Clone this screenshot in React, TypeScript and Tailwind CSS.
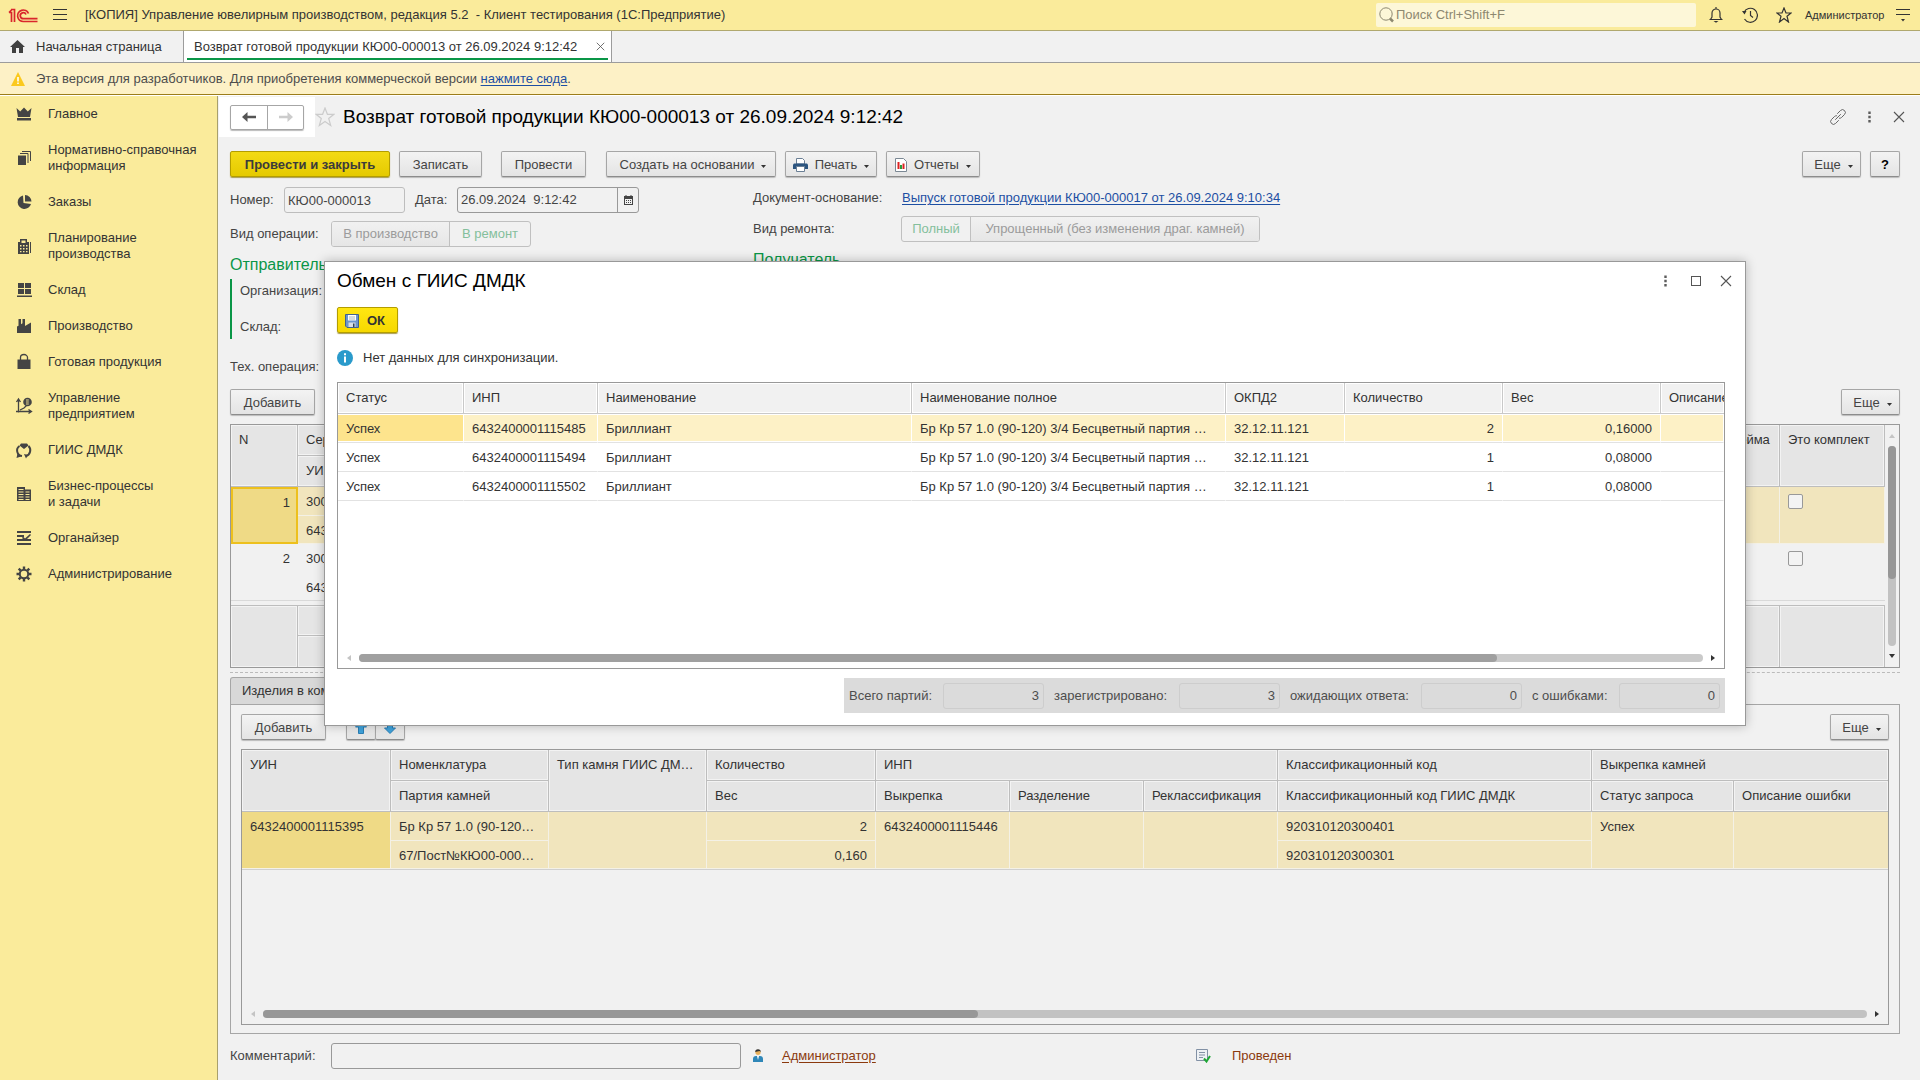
import type { ReactNode } from 'react'

type IconName = 'crown' | 'docs' | 'pie' | 'calc' | 'boxes' | 'factory' | 'bag' | 'chart' | 'cycle' | 'building' | 'list' | 'gear'

const ICONS: Record<IconName, ReactNode> = {
  crown: <path d="M1.500 3l3.700 3.500L9 2.500l3.800 4L16.500 3l-1.500 9H3zM2 13h14v2.500H2z" />,
  docs: (
    <>
      <path d="M3 6.500h8V16H3z" />
      <path d="M5 4.500h8V14M7 2.500h8.500V12" fill="none" stroke="currentColor" />
    </>
  ),
  pie: (
    <>
      <path d="M8 2.500a6.800 6.800 0 1 0 8 8.500L8.500 10z" />
      <path d="M10 2v6.500h6.500A6.500 6.500 0 0 0 10 2z" />
    </>
  ),
  calc: (
    <>
      <path d="M5 2h7v3h2v12H3V5h2zm1.500 1.500V6h4V3.500zM5 8v1.500h1.500V8zm3 0v1.500h1.500V8zm3 0v1.500h1.500V8zm-6 3v1.500h1.500V11zm3 0v1.500h1.500V11zm3 0v1.500h1.500V11zm-6 3v1.200h1.500V14zm3 0v1.200h1.500V14zm3 0v1.200h1.500V14z" fillRule="evenodd" />
      <path d="M15 5h1v11h-1z" />
    </>
  ),
  boxes: <path d="M3 2h6v5H3zM10 2h6v5h-6zM3 8h6v5H3zM10 8h6v5h-6zM2 14.500h15V16H2z" />,
  factory: <path d="M2 16V9.500l1.500-.8V2H6v5.200l1.500-1V2H10v7l6-3.500V16z" />,
  bag: (
    <>
      <path d="M2.500 6.500h13V16h-13z" />
      <path d="M5.500 8.500V4.500a3.500 3 0 0 1 7 0v4" fill="none" stroke="currentColor" strokeWidth="1.300" />
    </>
  ),
  chart: (
    <>
      <path d="M3.500 2v13.500M1 14.500h15M1.500 5l2-3 2 3M13.500 12.500l3 2-3 2M5 13l4-2 3-3" fill="none" stroke="currentColor" strokeWidth="1.300" />
      <circle cx="12.500" cy="5" r="4.300" />
      <path d="M11 3h2.800M11 5h2.800M11 7h2.800" stroke="#faeb9b" strokeWidth=".9" />
    </>
  ),
  cycle: (
    <>
      <path d="M4.500 5A5.500 5.500 0 0 0 7 15M13.500 5a6 6 0 0 1-2.500 10" fill="none" stroke="currentColor" strokeWidth="2" />
      <path d="M6 2.500h6l1.500 2L9 8 4.500 4.500zM1.500 17l1-4.500L6 15.500zM9 13l4 1-2 3.500z" />
    </>
  ),
  building: <path d="M2 2h8v2.500h6V16H2zm1.500 2v1h5V4zm0 2.500v1h5v-1zm0 2.500v1h5V9zm0 2.500v1h5v-1zm7-5v1h4v-1zm0 2.500v1h4V9zm0 2.500v1h4v-1zm0 2.500v1h4v-1zm-7 0v1h5v-1z" fillRule="evenodd" />,
  list: <path d="M2 2h14v2H2zM2 6h7v2H2zM2 10h14v2H2zM2 14h14v2H2zM8 7.500l2 2 5-4.500 1 1-6 6-3-3z" />,
  gear: (
    <>
      <circle cx="9" cy="9" r="4.200" fill="none" stroke="currentColor" strokeWidth="2" />
      <path d="M9 1.500v3M9 13.500v3M1.500 9h3M13.500 9h3M3.700 3.700l2 2M12.300 12.300l2 2M3.700 14.300l2-2M12.300 5.700l2-2" stroke="currentColor" strokeWidth="2.400" />
    </>
  ),
}

const SECTIONS: { icon: IconName; lines: string[] }[] = [
  { icon: 'crown', lines: ['Главное'] },
  { icon: 'docs', lines: ['Нормативно-справочная', 'информация'] },
  { icon: 'pie', lines: ['Заказы'] },
  { icon: 'calc', lines: ['Планирование', 'производства'] },
  { icon: 'boxes', lines: ['Склад'] },
  { icon: 'factory', lines: ['Производство'] },
  { icon: 'bag', lines: ['Готовая продукция'] },
  { icon: 'chart', lines: ['Управление', 'предприятием'] },
  { icon: 'cycle', lines: ['ГИИС ДМДК'] },
  { icon: 'building', lines: ['Бизнес-процессы', 'и задачи'] },
  { icon: 'list', lines: ['Органайзер'] },
  { icon: 'gear', lines: ['Администрирование'] },
]

const BATCHES = [
  { inp: '6432400001115485', qty: '2', weight: '0,16000' },
  { inp: '6432400001115494', qty: '1', weight: '0,08000' },
  { inp: '6432400001115502', qty: '1', weight: '0,08000' },
]

const TOTALS = [
  { id: 'total', label: 'Всего партий:', value: '3', width: 'w-[84px]' },
  { id: 'registered', label: 'зарегистрировано:', value: '3', width: 'w-[115px]' },
  { id: 'waiting', label: 'ожидающих ответа:', value: '0', width: 'w-[121px]' },
  { id: 'errors', label: 'с ошибками:', value: '0', width: 'w-[77px]' },
]

const BUTTON = 'flex h-[26px] shrink-0 items-center justify-center rounded-xs border border-[#a6a6a6] border-b-[#8c8c8c] bg-linear-to-b from-[#f3f3f3] to-[#e4e4e4] pt-px text-[#444] shadow-[0_1px_1px_#bbb]'
const SEGMENTS = 'flex h-[26px] overflow-hidden rounded-[3px] border border-[#c0c0c0]'
const HEAD = 'truncate border-r border-b border-[#bdbdbd] bg-[#e5e5e5] px-2 pt-[7px] text-left align-top font-normal leading-4 shadow-[inset_0_0_0_1px_#f3f3f3]'
const CELL = 'truncate border-r border-b border-[#f4f1e6] bg-[#f1e5bd] px-2 pt-[7px] align-top leading-4'
const DIALOG_HEAD = 'h-[31px] truncate border-r border-b border-[#c9c9c9] bg-[#f1f1f1] px-2 text-left font-normal shadow-[inset_0_0_0_1px_#fff]'
const DIALOG_CELL = 'truncate border-r border-b border-b-[#e2e2e2] px-2 pt-[2px]'
const DIALOG_SELECTED = 'border-r-white shadow-[inset_0_1px_#fff,inset_0_-1px_#fff]'

function Caret() {
  return (
    <svg className="h-[3px] w-[5px] shrink-0" viewBox="0 0 5 3" fill="#333">
      <path d="M0 0h5L2.500 3z" />
    </svg>
  )
}

function MoreButton() {
  return (
    <button type="button" className={`${BUTTON} w-[59px] gap-[7px] pl-1`}>
      Еще
      <span className="pt-1"><Caret /></span>
    </button>
  )
}

function Dots() {
  return (
    <svg className="h-3 w-[3px]" viewBox="0 0 3 12" fill="#5c5c5c">
      <path d="M.300.500h2.400v2.400H.300zM.300 4.800h2.400v2.400H.300zM.300 9.100h2.400v2.400H.300z" />
    </svg>
  )
}

function Cross({ className }: { className: string }) {
  return (
    <svg className={className} viewBox="0 0 12 12" fill="none" stroke="#555" strokeWidth="1.100">
      <path d="M1 1l10 10M11 1L1 11" />
    </svg>
  )
}

function HorizontalScroll({ visible, thumb, track }: { visible: number; thumb: string; track: string }) {
  return (
    <div className="mt-auto mb-[6px] flex items-center gap-[7px] px-2">
      <svg className="h-2 w-[6px]" viewBox="0 0 6 8" fill="#c4c4c4">
        <path d="M5 1v6L1 4z" />
      </svg>
      <div className={`h-2 flex-1 rounded-full ${track}`}>
        <div className={`h-2 rounded-full ${thumb}`} style={{ width: `${visible * 100}%` }} />
      </div>
      <svg className="h-2 w-[6px]" viewBox="0 0 6 8" fill="#333">
        <path d="M1 1v6l4-3z" />
      </svg>
    </div>
  )
}

function TitleBar() {
  return (
    <header className="flex h-[31px] items-center border-b border-[#b0a86e] bg-[#faeb9b] pr-[10px] text-[#333]">
      <svg className="ml-2 h-[15px] w-[30px] shrink-0" viewBox="0 0 30 15" fill="none" stroke="#d9262c" strokeWidth="1.700">
        <path d="M1 4.500h2.500V14M3 1.500h3.500V14M1 4.500L4 1.500" />
        <path d="M20.500 5.500A5.700 5.700 0 1 0 15.500 13.500H29.500" />
        <path d="M18 6.500a3 3 0 1 0-2.500 4.200H29.500" />
      </svg>
      <button type="button" aria-label="Меню" className="ml-[15px]">
        <svg className="h-3 w-[14px]" viewBox="0 0 14 12" stroke="#333">
          <path d="M0 .500h14M0 5.500h14M0 10.500h14" />
        </svg>
      </button>
      <h1 className="ml-[18px] flex-1 whitespace-pre">[КОПИЯ] Управление ювелирным производством, редакция 5.2  - Клиент тестирования (1С:Предприятие)</h1>
      <div className="flex h-6 w-80 items-center gap-[2px] rounded-xs bg-[#fdf7d8] px-[3px]">
        <svg className="h-4 w-[15px] shrink-0" viewBox="0 0 15 16" fill="none" stroke="#8d8870">
          <circle cx="7" cy="7" r="6.200" />
          <path d="M11 11.500l3 3" strokeWidth="2.500" />
        </svg>
        <input type="search" aria-label="Поиск" placeholder="Поиск Ctrl+Shift+F" className="w-full bg-transparent outline-none placeholder:text-[#8d8870]" />
      </div>
      <button type="button" aria-label="Уведомления" className="ml-3">
        <svg className="h-4 w-4" viewBox="0 0 16 16" fill="none" stroke="#333" strokeWidth="1.200">
          <path d="M1.500 12.500h13M2.500 12.500L4 10V6a4 4 0 0 1 8 0v4l1.500 2.500M8 0v2" />
          <path d="M5.500 14h5L8 15.800z" fill="#333" stroke="none" />
        </svg>
      </button>
      <button type="button" aria-label="История" className="ml-[18px]">
        <svg className="h-4 w-4" viewBox="0 0 16 16" fill="none" stroke="#333" strokeWidth="1.200">
          <path d="M2 5.500A7 7 0 1 1 2.500 12M8.500 4v4.500l2.500 2" />
          <path d="M0 4h4.500L2.500 7.500z" fill="#333" stroke="none" />
        </svg>
      </button>
      <button type="button" aria-label="Избранное" className="ml-[18px]">
        <svg className="h-4 w-4" viewBox="0 0 16 16" fill="none" stroke="#333" strokeWidth="1.200">
          <path d="M8 1l2 5h5l-4 3.200L12.500 15 8 11.500 3.500 15 5 9.200 1 6h5z" />
        </svg>
      </button>
      <span className="ml-[13px] w-[77px] text-[11px]">Администратор</span>
      <button type="button" aria-label="Настройки" className="ml-[14px]">
        <svg className="h-[13px] w-[14px]" viewBox="0 0 14 13" stroke="#333">
          <path d="M0 .500h14M0 5.500h14" />
          <path d="M5 10h4l-2 2.500z" fill="#333" stroke="none" />
        </svg>
      </button>
    </header>
  )
}

function OpenTabs() {
  return (
    <nav className="flex h-8 border-b border-[#9c9c9c] bg-[#f1f1f1] text-[#333]">
      <a href="#home" className="flex w-[184px] items-center gap-[11px] border-r border-[#9c9c9c] pl-[10px]">
        <svg className="h-[13px] w-[15px]" viewBox="0 0 15 13" fill="#404040">
          <path d="M7.500 0L15 7h-2v6H9V8H6v5H2V7H0z" />
        </svg>
        Начальная страница
      </a>
      <div className="flex w-[428px] flex-col border-r border-[#9c9c9c] bg-white px-[3px]">
        <div className="flex flex-1 items-center justify-between pt-1 pr-[3px] pl-[7px]">
          <a href="#document" className="whitespace-nowrap">Возврат готовой продукции КЮ00-000013 от 26.09.2024 9:12:42</a>
          <button type="button" aria-label="Закрыть вкладку"><Cross className="h-[9px] w-[9px]" /></button>
        </div>
        <div className="mb-[2px] h-[2px] bg-[#0a9647]" />
      </div>
    </nav>
  )
}

function Sidebar() {
  return (
    <nav className="w-[218px] shrink-0 border-r border-[#a8a06c] bg-[#faeb9b] text-[#333]">
      {SECTIONS.map((section) => (
        <a key={section.icon} href={`#${section.icon}`} className="flex items-center gap-[15px] py-[10px] pl-[15px] leading-4">
          <svg className="-my-px h-[18px] w-[18px] shrink-0 text-[#444]" viewBox="0 0 18 18" fill="currentColor">
            {ICONS[section.icon]}
          </svg>
          <span>
            {section.lines.map((line) => (
              <span key={line} className="block whitespace-nowrap">{line}</span>
            ))}
          </span>
        </a>
      ))}
    </nav>
  )
}

function DocumentHeader() {
  return (
    <div className="flex h-[41px] items-center pr-[15px]">
      <div className="mt-px ml-px flex h-10 w-24 shrink-0 items-center bg-white pl-[11px]">
        <div className="flex h-[25px] rounded-xs border border-[#a6a6a6] shadow-[0_1px_1px_#bbb]">
          <button type="button" aria-label="Назад" className="flex w-[37px] items-center justify-center border-r border-[#a6a6a6]">
            <svg className="h-[10px] w-[14px]" viewBox="0 0 14 10" fill="#555">
              <path d="M0 5l5.500-5v3.700H14v2.600H5.500V10z" />
            </svg>
          </button>
          <button type="button" aria-label="Вперед" className="flex w-[35px] items-center justify-center">
            <svg className="h-[10px] w-[14px]" viewBox="0 0 14 10" fill="#ccc">
              <path d="M14 5L8.500 0v3.700H0v2.600h8.500V10z" />
            </svg>
          </button>
        </div>
      </div>
      <svg className="h-5 w-5 shrink-0" viewBox="0 0 20 20" fill="none" stroke="#ccc" strokeWidth="1.200">
        <path d="M10 1l2.400 6.300h6.500l-5.200 4.200 2 7L10 14.500l-5.700 4 2-7L1.100 7.300h6.500z" />
      </svg>
      <h2 className="ml-2 flex-1 text-[19px] leading-5 text-black">Возврат готовой продукции КЮ00-000013 от 26.09.2024 9:12:42</h2>
      <button type="button" aria-label="Ссылка" className="mr-[22px]">
        <svg className="h-4 w-4" viewBox="0 0 16 16" fill="none" stroke="#666" strokeLinecap="round">
          <path d="M7.500 4.500L10.500 1.500a2.800 2.800 0 0 1 4 4L11.500 8.500a2.800 2.800 0 0 1-2 .8M8.500 11.500l-3 3a2.800 2.800 0 0 1-4-4l3-3a2.800 2.800 0 0 1 2-.8M5.500 10.500l5-5" />
        </svg>
      </button>
      <button type="button" aria-label="Еще" className="mr-[22px]"><Dots /></button>
      <button type="button" aria-label="Закрыть"><Cross className="h-3 w-3" /></button>
    </div>
  )
}

function CommandBar() {
  return (
    <div className="mt-[14px] flex">
      <button type="button" className="h-[26px] w-40 rounded-xs border border-[#b39d00] bg-linear-to-b from-[#f3da14] to-[#e5ca00] pt-px font-bold text-[#3b3b3b] shadow-[0_1px_1px_#a99d50]">Провести и закрыть</button>
      <button type="button" className={`${BUTTON} ml-[9px] w-[83px]`}>Записать</button>
      <button type="button" className={`${BUTTON} ml-[19px] w-[85px]`}>Провести</button>
      <button type="button" className={`${BUTTON} ml-5 w-[170px] gap-[7px] pl-1`}>
        Создать на основании
        <span className="pt-1"><Caret /></span>
      </button>
      <button type="button" className={`${BUTTON} ml-[9px] w-[92px] gap-[7px]`}>
        <svg className="h-[14px] w-[15px]" viewBox="0 0 15 14">
          <path d="M3.500.500h6l2 2V6h-8z" fill="#fff" stroke="#6a7f95" />
          <path d="M1 5.500h13l1 1V11H0V6.500z" fill="#2c5580" />
          <path d="M3.500 8.500h8v5h-8z" fill="#fff" stroke="#6a7f95" />
        </svg>
        Печать
        <span className="pt-1"><Caret /></span>
      </button>
      <button type="button" className={`${BUTTON} ml-[9px] w-[94px] gap-[7px]`}>
        <svg className="h-[14px] w-3" viewBox="0 0 12 14">
          <path d="M.500.500h8l3 3v10H.500z" fill="#fff" stroke="#7b8894" />
          <path d="M2.500 4h2v7h-2z" fill="#d22" />
          <path d="M5 7h2v4H5z" fill="#2a9a3c" />
          <path d="M7.500 5.500h2V11h-2z" fill="#d22" />
        </svg>
        Отчеты
        <span className="pt-1"><Caret /></span>
      </button>
      <div className="ml-auto flex gap-[9px]">
        <MoreButton />
        <button type="button" className={`${BUTTON} w-[30px] font-bold text-black`}>?</button>
      </div>
    </div>
  )
}

function DocumentForm() {
  return (
    <div className="mt-[10px] flex text-[#444]">
      <div className="w-[523px] shrink-0">
        <div className="flex items-center">
          <label htmlFor="number" className="w-[54px]">Номер:</label>
          <input id="number" readOnly value="КЮ00-000013" className="h-[26px] w-[121px] rounded-[3px] border border-[#bdbdbd] px-[3px]" />
          <label htmlFor="date" className="ml-[10px] w-[42px]">Дата:</label>
          <div className="flex h-[26px] w-[182px] rounded-[3px] border border-[#999]">
            <input id="date" defaultValue="26.09.2024  9:12:42" className="w-[159px] px-[3px]" />
            <button type="button" aria-label="Выбрать дату" className="flex flex-1 items-center justify-center border-l border-[#999]">
              <svg className="h-[10px] w-[9px]" viewBox="0 0 9 10">
                <path d="M0 1h1.500V0h1v1h4V0h1v1H9v9H0zm1 3v5h7V4z" fill="#444" fillRule="evenodd" />
                <path d="M2 5.500h5M2 7.500h5" stroke="#444" strokeDasharray="1 1" />
              </svg>
            </button>
          </div>
        </div>
        <div className="mt-2 flex items-center">
          <span className="w-[101px]">Вид операции:</span>
          <div className={SEGMENTS}>
            <button type="button" disabled className="w-[118px] border-r border-[#c0c0c0] bg-linear-to-b from-[#f1f1f1] to-[#e6e6e6] text-[#9b9b9b]">В производство</button>
            <button type="button" disabled className="w-20 text-[#84bf9c]">В ремонт</button>
          </div>
        </div>
        <h3 className="mt-2 text-base leading-5 text-[#0a9647]">Отправитель</h3>
        <div className="mt-1 flex h-[60px] flex-col justify-between border-l-2 border-[#0a9647] pl-2 leading-6">
          <span>Организация:</span>
          <span>Склад:</span>
        </div>
        <div className="mt-4 leading-6">Тех. операция:</div>
      </div>
      <div>
        <div className="flex h-[22px] items-center">
          <span className="w-[149px]">Документ-основание:</span>
          <a href="#basis" className="text-[#1d4fa3] underline underline-offset-2">Выпуск готовой продукции КЮ00-000017 от 26.09.2024 9:10:34</a>
        </div>
        <div className="mt-[7px] flex items-center">
          <span className="w-[148px]">Вид ремонта:</span>
          <div className={SEGMENTS}>
            <button type="button" disabled className="w-[69px] border-r border-[#c0c0c0] text-[#84bf9c]">Полный</button>
            <button type="button" disabled className="w-[288px] bg-linear-to-b from-[#f1f1f1] to-[#e6e6e6] text-[#9b9b9b]">Упрощенный (без изменения драг. камней)</button>
          </div>
        </div>
        <h3 className="mt-2 text-base leading-5 text-[#0a9647]">Получатель</h3>
      </div>
    </div>
  )
}

function ItemsTable() {
  const rows = [
    { n: 1, selected: true },
    { n: 2, selected: false },
  ]

  return (
    <div className="mt-[9px] flex border border-[#999] text-[#333]">
      <table className="flex-1 table-fixed border-separate border-spacing-0">
        <colgroup>
          <col className="w-[67px]" />
          <col />
          <col className="w-16" />
          <col className="w-[105px]" />
        </colgroup>
        <thead>
          <tr className="h-[31px]">
            <th rowSpan={2} className={HEAD}>N</th>
            <th className={HEAD}>Серия</th>
            <th rowSpan={2} className={HEAD}>Клейма</th>
            <th rowSpan={2} className={HEAD}>Это комплект</th>
          </tr>
          <tr className="h-[31px]">
            <th className={HEAD}>УИН</th>
          </tr>
        </thead>
        {rows.map(({ n, selected }) => {
          const cell = selected ? CELL : 'truncate border-b border-[#d9d9d9] px-2 pt-[7px] align-top leading-4'
          return (
            <tbody key={n}>
              <tr className="h-[29px]">
                <td rowSpan={2} className={selected ? 'border-2 border-[#edc01d] bg-[#efda86] px-[6px] pt-[6px] text-right align-top leading-4' : `${cell} text-right`}>{n}</td>
                <td className={selected ? CELL : 'px-2 pt-[7px] align-top leading-4'}>3000000000{n}</td>
                <td rowSpan={2} className={cell} />
                <td rowSpan={2} className={cell}>
                  <input type="checkbox" aria-label={`Это комплект, строка ${n}`} className="block h-[15px] w-[15px] appearance-none rounded-xs border border-[#999] bg-[#f3f3f3]" />
                </td>
              </tr>
              <tr className="h-7">
                <td className={cell}>6432400001115395</td>
              </tr>
            </tbody>
          )
        })}
        <tfoot>
          <tr className="h-1"><td colSpan={4} /></tr>
          <tr className="h-[31px]">
            <td rowSpan={2} className={`${HEAD} border-t border-b-0`} />
            <td className={`${HEAD} border-t`} />
            <td rowSpan={2} className={`${HEAD} border-t border-b-0`} />
            <td rowSpan={2} className={`${HEAD} border-t border-b-0`} />
          </tr>
          <tr className="h-[31px]">
            <td className={`${HEAD} border-b-0`} />
          </tr>
        </tfoot>
      </table>
      <div className="flex w-[14px] flex-col items-center gap-[7px] py-[9px]">
        <svg className="h-[5px] w-[6px]" viewBox="0 0 6 5" fill="#c4c4c4"><path d="M0 4h6L3 0z" /></svg>
        <div className="w-2 flex-1 rounded-full bg-[#c2c2c2]">
          <div className="h-2/3 w-2 rounded-full bg-[#979797]" />
        </div>
        <svg className="h-[5px] w-[6px]" viewBox="0 0 6 5" fill="#333"><path d="M0 1h6L3 5z" /></svg>
      </div>
    </div>
  )
}

function StonesTable() {
  return (
    <div className="mt-[9px] flex flex-1 flex-col border border-[#999] text-[#333]">
      <table className="w-full table-fixed border-separate border-spacing-0">
        <colgroup>
          <col className="w-[149px]" />
          <col className="w-[158px]" />
          <col className="w-[158px]" />
          <col className="w-[169px]" />
          <col className="w-[134px]" />
          <col className="w-[134px]" />
          <col className="w-[134px]" />
          <col className="w-[314px]" />
          <col className="w-[142px]" />
          <col />
        </colgroup>
        <thead>
          <tr className="h-[31px]">
            <th rowSpan={2} className={HEAD}>УИН</th>
            <th className={HEAD}>Номенклатура</th>
            <th rowSpan={2} className={HEAD}>Тип камня ГИИС ДМ…</th>
            <th className={HEAD}>Количество</th>
            <th colSpan={3} className={HEAD}>ИНП</th>
            <th className={HEAD}>Классификационный код</th>
            <th colSpan={2} className={`${HEAD} border-r-0`}>Выкрепка камней</th>
          </tr>
          <tr className="h-[31px]">
            <th className={HEAD}>Партия камней</th>
            <th className={HEAD}>Вес</th>
            <th className={HEAD}>Выкрепка</th>
            <th className={HEAD}>Разделение</th>
            <th className={HEAD}>Реклассификация</th>
            <th className={HEAD}>Классификационный код ГИИС ДМДК</th>
            <th className={HEAD}>Статус запроса</th>
            <th className={`${HEAD} border-r-0`}>Описание ошибки</th>
          </tr>
        </thead>
        <tbody>
          <tr className="h-[29px]">
            <td rowSpan={2} className="border-r border-b border-[#f4f1e6] bg-[#efda86] px-2 pt-[7px] align-top leading-4">6432400001115395</td>
            <td className={CELL}>Бр Кр 57 1.0 (90-120…</td>
            <td rowSpan={2} className={CELL} />
            <td className={`${CELL} text-right`}>2</td>
            <td rowSpan={2} className={CELL}>6432400001115446</td>
            <td rowSpan={2} className={CELL} />
            <td rowSpan={2} className={CELL} />
            <td className={CELL}>920310120300401</td>
            <td rowSpan={2} className={CELL}>Успех</td>
            <td rowSpan={2} className={`${CELL} border-r-0`} />
          </tr>
          <tr className="h-7">
            <td className={CELL}>67/Пост№КЮ00-000…</td>
            <td className={`${CELL} text-right`}>0,160</td>
            <td className={CELL}>920310120300301</td>
          </tr>
        </tbody>
      </table>
      <div className="border-t border-[#d0d0d0]" />
      <HorizontalScroll visible={0.446} thumb="bg-[#979797]" track="bg-[#c2c2c2]" />
    </div>
  )
}

function StatusRow() {
  return (
    <div className="mt-[9px] mb-[11px] flex h-[26px] items-center text-[#8b3a0e]">
      <label htmlFor="comment" className="w-[101px] text-[#444]">Комментарий:</label>
      <input id="comment" className="h-[26px] w-[410px] rounded-[3px] border border-[#999] px-1" />
      <svg className="ml-3 h-[14px] w-[10px]" viewBox="0 0 10 14">
        <circle cx="5" cy="3.300" r="2.600" fill="#e8b05a" />
        <path d="M2.200 3a2.800 2.800 0 0 1 5.600 0L6.500 2z" fill="#333" />
        <path d="M0 13V10a3 3 0 0 1 3-3h4a3 3 0 0 1 3 3v3z" fill="#2f87b8" />
        <path d="M4 7h2l-1 4z" fill="#fff" />
      </svg>
      <a href="#author" className="ml-[19px] w-[96px] underline underline-offset-2">Администратор</a>
      <svg className="ml-[318px] h-[14px] w-[15px]" viewBox="0 0 15 14">
        <path d="M.500.500h11v11H.500z" fill="#eef1f4" stroke="#8291a5" />
        <path d="M3 3.500h6M3 6h6M3 8.500h4" stroke="#8291a5" />
        <path d="M8 9.500l2.500 3L14 7" fill="none" stroke="#1fa636" strokeWidth="2" />
      </svg>
      <span className="ml-[21px]">Проведен</span>
    </div>
  )
}

function ExchangeDialog() {
  return (
    <section role="dialog" aria-label="Обмен с ГИИС ДМДК" className="absolute top-[261px] right-[174px] left-[324px] border border-[#999] bg-white pr-5 pb-3 pl-3 text-[#333] shadow-[0_0_10px_rgba(0,0,0,0.25)]">
      <div className="flex h-[38px] items-center">
        <h2 className="flex-1 text-[19px] text-black">Обмен с ГИИС ДМДК</h2>
        <button type="button" aria-label="Еще" className="mr-6"><Dots /></button>
        <button type="button" aria-label="Развернуть" className="mr-[19px] h-[10px] w-[10px] border border-[#555]" />
        <button type="button" aria-label="Закрыть" className="-mr-[7px]"><Cross className="h-3 w-3" /></button>
      </div>
      <button type="button" className="mt-[7px] flex h-[26px] w-[61px] items-center gap-2 rounded-xs border border-[#b39d00] bg-linear-to-b from-[#ffe611] to-[#f6d800] pt-px pl-[7px] font-bold shadow-[0_1px_1px_#a99d50]">
        <svg className="h-[14px] w-[14px]" viewBox="0 0 14 14">
          <path d="M.500.500h13v13H2l-1.500-1.500z" fill="#6d95cb" stroke="#41628f" />
          <path d="M3 1h8v5.500H3z" fill="#fff" />
          <path d="M4 3h6M4 5h6" stroke="#9aa" strokeWidth=".8" />
          <path d="M3.500 8.500h7V13h-7z" fill="#d7dde5" />
          <path d="M8 9.500h1.500V13H8z" fill="#345" />
        </svg>
        ОК
      </button>
      <div className="mt-[17px] flex h-4 items-center gap-[10px]">
        <svg className="h-4 w-4" viewBox="0 0 16 16">
          <circle cx="8" cy="8" r="8" fill="#2a9acb" />
          <path d="M7 3.200h2v2H7zM7 6.500h2v6H7z" fill="#fff" />
        </svg>
        Нет данных для синхронизации.
      </div>
      <div className="mt-4 flex h-[287px] flex-col overflow-hidden border border-[#999]">
        <table className="w-full min-w-[1386px] table-fixed border-separate border-spacing-0">
          <colgroup>
            <col className="w-[126px]" />
            <col className="w-[134px]" />
            <col className="w-[314px]" />
            <col className="w-[314px]" />
            <col className="w-[119px]" />
            <col className="w-[158px]" />
            <col className="w-[158px]" />
            <col />
          </colgroup>
          <thead>
            <tr>
              <th className={DIALOG_HEAD}>Статус</th>
              <th className={DIALOG_HEAD}>ИНП</th>
              <th className={DIALOG_HEAD}>Наименование</th>
              <th className={DIALOG_HEAD}>Наименование полное</th>
              <th className={DIALOG_HEAD}>ОКПД2</th>
              <th className={DIALOG_HEAD}>Количество</th>
              <th className={DIALOG_HEAD}>Вес</th>
              <th className="overflow-hidden border-b border-[#c9c9c9] bg-[#f1f1f1] pl-2 text-left font-normal whitespace-nowrap shadow-[inset_0_0_0_1px_#fff]">Описание</th>
            </tr>
          </thead>
          <tbody>
            {BATCHES.map((batch, index) => {
              const selected = index === 0
              const cell = selected ? `${DIALOG_CELL} ${DIALOG_SELECTED} bg-[#fdf1c6]` : `${DIALOG_CELL} border-r-transparent`
              return (
                <tr key={batch.inp} className="h-[29px]">
                  <td className={selected ? `${DIALOG_CELL} ${DIALOG_SELECTED} bg-[#fde48d]` : cell}>Успех</td>
                  <td className={cell}>{batch.inp}</td>
                  <td className={cell}>Бриллиант</td>
                  <td className={cell}>Бр Кр 57 1.0 (90-120) 3/4 Бесцветный партия …</td>
                  <td className={cell}>32.12.11.121</td>
                  <td className={`${cell} text-right`}>{batch.qty}</td>
                  <td className={`${cell} text-right`}>{batch.weight}</td>
                  <td className={cell} />
                </tr>
              )
            })}
          </tbody>
        </table>
        <HorizontalScroll visible={0.847} thumb="bg-[#a0a0a0]" track="bg-[#cacaca]" />
      </div>
      <div className="mt-[9px] ml-auto flex h-[35px] w-fit items-center gap-[10px] bg-[#dbdbdb] px-[5px] text-[#4d4d4d]">
        {TOTALS.map((total) => (
          <div key={total.id} className="flex items-center gap-[10px]">
            <label htmlFor={total.id} className={`${total.width} whitespace-nowrap`}>{total.label}</label>
            <input id={total.id} readOnly value={total.value} className="h-[26px] w-[101px] rounded-[3px] border border-[#cdcdcd] px-1 text-right" />
          </div>
        ))}
      </div>
    </section>
  )
}

export default function App() {
  return (
    <div className="relative flex min-h-screen flex-col bg-[#f1f1f1] font-['Liberation_Sans',Arial,sans-serif] text-[13px] leading-4">
      <TitleBar />
      <OpenTabs />
      <div className="flex h-8 items-center border-b border-[#9c7d1a] bg-[#fdf1c6] pl-[11px] text-[#4d4d4d]">
        <svg className="mr-[11px] h-[14px] w-[14px]" viewBox="0 0 14 14">
          <path d="M7 0l7 14H0z" fill="#fbc91e" />
          <path d="M6.200 5h1.600v4.500H6.200zM6.200 10.500h1.600V12H6.200z" fill="#fff" />
        </svg>
        <p>
          Эта версия для разработчиков. Для приобретения коммерческой версии <a href="#buy" className="text-[#1d4fa3] underline underline-offset-2">нажмите сюда</a>.
        </p>
      </div>
      <div className="flex flex-1 border-t border-white">
        <Sidebar />
        <main className="flex min-w-0 flex-1 flex-col">
          <DocumentHeader />
          <div className="flex flex-1 flex-col pr-5 pl-3">
            <CommandBar />
            <DocumentForm />
            <div className="mt-[10px] flex justify-between">
              <button type="button" className={`${BUTTON} w-[85px]`}>Добавить</button>
              <MoreButton />
            </div>
            <ItemsTable />
            <div className="mt-1 border-t border-dashed border-[#bbb]" />
            <div className="mt-1 flex">
              <button type="button" className="h-[27px] rounded-t-[3px] border border-b-0 border-[#a6a6a6] bg-[#d8d8d8] px-[11px] text-[#333]">Изделия в комплекте</button>
            </div>
            <section className="flex flex-1 flex-col border border-[#a6a6a6] px-[10px] pt-[9px] pb-2">
              <div className="flex">
                <button type="button" className={`${BUTTON} w-[85px]`}>Добавить</button>
                <button type="button" aria-label="Переместить вверх" className={`${BUTTON} ml-5 w-[30px]`}>
                  <svg className="h-[13px] w-3" viewBox="0 0 12 13" fill="#3fa3dc" stroke="#2b7fb5"><path d="M6 .500L11.500 6H8.500v6.500h-5V6h-3z" /></svg>
                </button>
                <button type="button" aria-label="Переместить вниз" className={`${BUTTON} -ml-px w-[30px]`}>
                  <svg className="h-[13px] w-3" viewBox="0 0 12 13" fill="#3fa3dc" stroke="#2b7fb5"><path d="M6 12.500L.500 7h3V.500h5V7h3z" /></svg>
                </button>
                <div className="ml-auto"><MoreButton /></div>
              </div>
              <StonesTable />
            </section>
            <StatusRow />
          </div>
        </main>
      </div>
      <ExchangeDialog />
    </div>
  )
}
